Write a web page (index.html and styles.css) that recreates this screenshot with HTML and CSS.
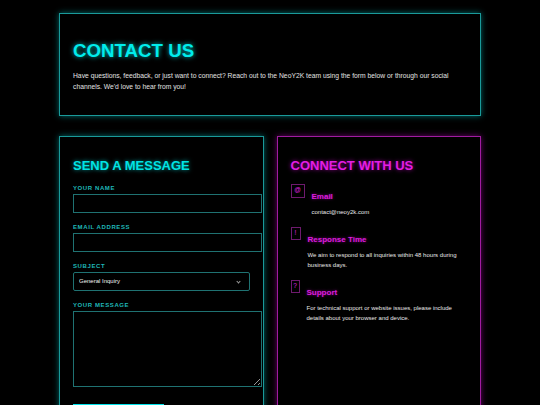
FILE: index.html
```html
<!DOCTYPE html>
<html lang="en">
<head>
<meta charset="utf-8">
<title>Contact - NeoY2K</title>
<link rel="stylesheet" href="styles.css">
</head>
<body>
<div class="page">
  <header class="panel hero">
    <h1 class="hero-title">CONTACT US</h1>
    <p class="hero-text">Have questions, feedback, or just want to connect? Reach out to the NeoY2K team using the form below or through our social channels. We'd love to hear from you!</p>
  </header>

  <div class="columns">
    <section class="panel card">
      <h2 class="card-title title-cyan">SEND A MESSAGE</h2>
      <form class="contact-form">
        <div class="field">
          <label class="field-label" for="name">YOUR NAME</label>
          <input class="text-input" id="name" type="text">
        </div>
        <div class="field">
          <label class="field-label" for="email">EMAIL ADDRESS</label>
          <input class="text-input" id="email" type="email">
        </div>
        <div class="field">
          <label class="field-label" for="subject">SUBJECT</label>
          <div class="select-wrap">
            <select class="select-input" id="subject">
              <option>General Inquiry</option>
              <option>Support</option>
              <option>Feedback</option>
            </select>
            <span class="select-chevron"></span>
          </div>
        </div>
        <div class="field">
          <label class="field-label" for="message">YOUR MESSAGE</label>
          <textarea class="text-area" id="message"></textarea>
        </div>
        <button class="send-btn" type="button">SEND MESSAGE</button>
      </form>
    </section>

    <section class="panel panel-pink card">
      <h2 class="card-title title-pink">CONNECT WITH US</h2>
      <div class="contact-item">
        <span class="contact-icon icon-wide">@</span>
        <div class="contact-body">
          <h3 class="contact-title">Email</h3>
          <p class="contact-text">contact@neoy2k.com</p>
        </div>
      </div>
      <div class="contact-item">
        <span class="contact-icon">!</span>
        <div class="contact-body">
          <h3 class="contact-title">Response Time</h3>
          <p class="contact-text">We aim to respond to all inquiries within 48 hours during business days.</p>
        </div>
      </div>
      <div class="contact-item">
        <span class="contact-icon icon-narrow">?</span>
        <div class="contact-body">
          <h3 class="contact-title">Support</h3>
          <p class="contact-text">For technical support or website issues, please include details about your browser and device.</p>
        </div>
      </div>
    </section>
  </div>
</div>
</body>
</html>
```

FILE: styles.css
```css
* { box-sizing: content-box; }

body {
  margin: 0;
  background: #000;
  font-family: "Liberation Sans", Arial, sans-serif;
  color: #e6e6e6;
}

.page {
  width: 422px;
  margin: 13px auto 0;
}

.panel {
  background: #000;
  border: 1px solid #1a9a9a;
  box-shadow: 0 0 6px rgba(0, 230, 230, 0.45);
}

.panel-pink {
  border-color: #a01ca0;
  box-shadow: 0 0 6px rgba(230, 0, 230, 0.45);
}

.hero {
  padding: 26px 13px 23px;
}

.hero-title {
  margin: 0;
  font-size: 18.7px;
  line-height: 21px;
  font-weight: 700;
  color: #00ecec;
  text-shadow: 0 0 5px rgba(0, 255, 255, 0.75);
}

.hero-text {
  margin: 9px 0 0;
  font-size: 6.75px;
  line-height: 11px;
  color: #e2e2e2;
}

.columns {
  display: grid;
  grid-template-columns: 1fr 1fr;
  gap: 13px;
  margin-top: 20px;
}

.card {
  padding: 21px 13px;
}

.card-title {
  margin: 0 0 10.5px;
  font-size: 13px;
  line-height: 15px;
  font-weight: 700;
}

.title-cyan {
  color: #00e4e4;
  text-shadow: 0 0 4px rgba(0, 255, 255, 0.6);
}

.title-pink {
  color: #e41ee4;
  text-shadow: 0 0 4px rgba(255, 0, 255, 0.6);
}

.field {
  margin-bottom: 10px;
}

.field-label {
  display: block;
  margin-bottom: 2.5px;
  font-size: 6px;
  line-height: 8px;
  font-weight: 700;
  letter-spacing: 0.6px;
  color: #1fb8b8;
}

.text-input {
  display: block;
  width: 100%;
  height: 6.5px;
  padding: 5px;
  margin: 0;
  border: 1px solid #1f7272;
  background: #000;
  color: #fff;
  font: 6px "Liberation Sans", Arial, sans-serif;
  outline: none;
}

.select-wrap {
  position: relative;
}

.select-input {
  display: block;
  box-sizing: border-box;
  width: 100%;
  height: 18.5px;
  margin: 0;
  padding: 0 5px;
  border: 1px solid #1f7272;
  border-radius: 2px;
  background: #000;
  color: #f2f2f2;
  font: 6px "Liberation Sans", Arial, sans-serif;
  appearance: none;
  -webkit-appearance: none;
  outline: none;
}

.select-chevron {
  position: absolute;
  right: 10px;
  top: 7.5px;
  width: 2px;
  height: 2px;
  border-right: 1px solid #9a9a9a;
  border-bottom: 1px solid #9a9a9a;
  transform: rotate(45deg);
}

.text-area {
  display: block;
  width: 100%;
  height: 64px;
  padding: 5px;
  margin: 0;
  border: 1px solid #1f7272;
  background: #000;
  color: #fff;
  font: 6px "Liberation Sans", Arial, sans-serif;
  outline: none;
}

.send-btn {
  display: block;
  margin: 16.5px 0 0;
  padding: 0;
  width: 91px;
  height: 20px;
  border: none;
  background: #00e2ea;
  color: #000;
  font: 700 7px "Liberation Sans", Arial, sans-serif;
  letter-spacing: 0.6px;
}

.contact-item {
  display: flex;
  align-items: flex-start;
  gap: 7px;
  margin-bottom: 10px;
}

.contact-icon {
  flex: none;
  display: flex;
  align-items: center;
  justify-content: center;
  width: 8px;
  height: 11px;
  border: 1px solid #6e1a6e;
  color: #e020e0;
  font-size: 6.5px;
  line-height: 1;
}

.icon-wide {
  width: 12px;
  height: 12px;
}

.icon-narrow {
  width: 7px;
}

.contact-body {
  flex: 1;
}

.contact-title {
  margin: 8px 0 6px;
  font-size: 8px;
  line-height: 9.2px;
  font-weight: 700;
  color: #dc1edc;
  text-shadow: 0 0 3px rgba(255, 0, 255, 0.5);
}

.contact-text {
  margin: 0;
  font-size: 6px;
  line-height: 10px;
  color: #e8e8e8;
}
```
